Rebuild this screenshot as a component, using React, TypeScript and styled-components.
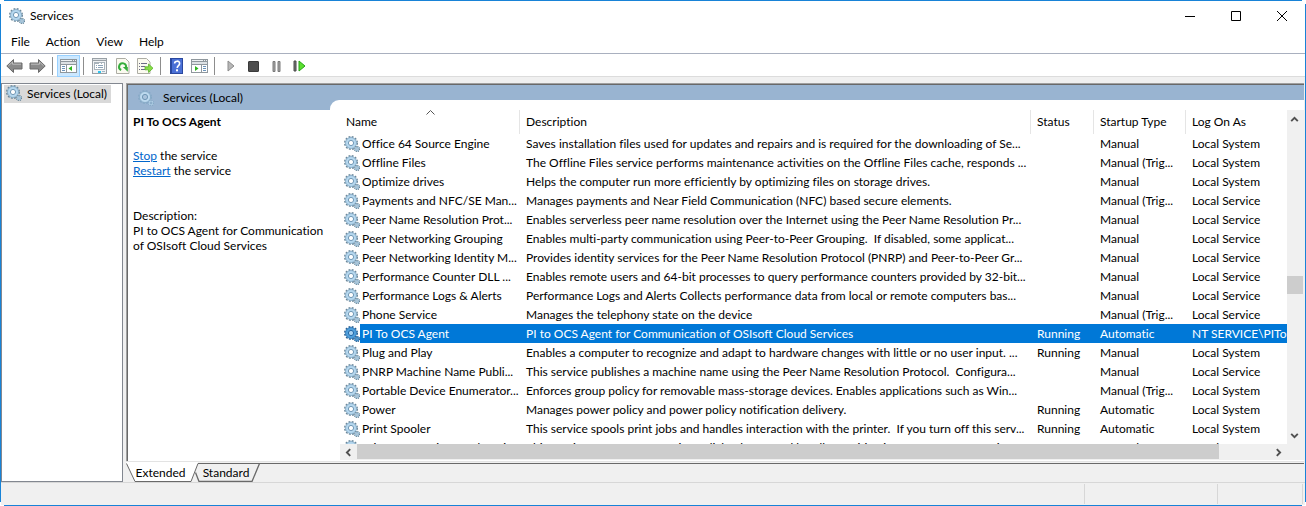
import React from "react";
import styled, { createGlobalStyle, css } from "styled-components";

const Global = createGlobalStyle`
  * { box-sizing: border-box; }
  html, body { margin: 0; padding: 0; background: #fff; }
  body, button, table {
    font-family: Lato, "Open Sans", sans-serif;
    font-size: 12px;
    line-height: 15px;
    font-variant-ligatures: none;
    color: #000;
  }
  button { border: 0; padding: 0; margin: 0; background: transparent; }
`;

const edge = "linear-gradient(#1883d7, #1883d7)";

const Window = styled.div`
  display: flex;
  flex-direction: column;
  height: 100vh;
  min-height: 320px;
  padding: 1px;
  background:
    ${edge} 4px 0 / calc(100% - 8px) 1px no-repeat,
    ${edge} 4px 100% / calc(100% - 8px) 1px no-repeat,
    ${edge} 0 4px / 1px calc(100% - 8px) no-repeat,
    ${edge} 100% 4px / 1px calc(100% - 8px) no-repeat,
    #fff;
`;

const TitleBar = styled.header`
  display: flex;
  align-items: center;
  height: 29px;
  padding-left: 8px;
`;

const Title = styled.h1`
  flex: 1;
  margin: 0 0 0 5px;
  font-size: 12px;
  font-weight: 400;
`;

const WindowButton = styled.button`
  display: flex;
  align-items: center;
  justify-content: center;
  width: 46px;
  height: 29px;
`;

const MenuBar = styled.nav`
  display: flex;
  align-items: center;
  gap: 16px;
  height: 24px;
  padding: 0 0 1px 10px;
  border-bottom: 1px solid #a9b0bf;
`;

const ToolBar = styled.div`
  display: flex;
  align-items: center;
  height: 23px;
  padding: 1px 0 0 2px;
  border-bottom: 1px solid #dcdcdc;
`;

const ToolButton = styled.button<{ $active?: boolean }>`
  display: flex;
  align-items: center;
  justify-content: center;
  width: 23px;
  height: 22px;
  margin-top: 1px;
  border: 1px solid ${(p) => (p.$active ? "#99d1ff" : "transparent")};
  background: ${(p) => (p.$active ? "#cce8ff" : "transparent")};
`;

const Separator = styled.span`
  width: 1px;
  height: 18px;
  margin: 0 4px 0 3px;
  background: #8d8d8d;
`;

const Workspace = styled.div`
  display: flex;
  flex: 1;
  min-height: 0;
  gap: 3px;
  padding: 6px 1px 0 0;
  background: #f0f0f0;
`;

const Tree = styled.aside`
  width: 122px;
  padding: 1px 2px;
  border: 1px solid #828790;
  background: #fff;
`;

const TreeItem = styled.button`
  display: flex;
  align-items: center;
  gap: 5px;
  height: 18px;
  padding: 0 4px 2px 2px;
  background: #d9d9d9;
  white-space: nowrap;
`;

const Main = styled.main`
  display: flex;
  flex: 1;
  flex-direction: column;
  min-width: 0;
`;

const Pane = styled.section`
  display: flex;
  flex: 1;
  min-height: 0;
  border-style: solid;
  border-width: 1px 0 0 1px;
  border-color: #a0a0a0;
  box-shadow: inset 1px 1px #696969;
  padding: 1px 0 0 1px;
  background: #fff;
`;

const PaneBody = styled.div`
  display: flex;
  flex: 1;
  min-width: 0;
  background: linear-gradient(#99b4d1, #99b4d1) 0 0 / 100% 25px no-repeat #fff;
`;

const Details = styled.div`
  width: 202px;
  flex: none;
  padding: 0 0 0 5px;
`;

const PaneTitle = styled.div`
  display: flex;
  align-items: center;
  gap: 9px;
  height: 25px;
  padding-left: 5px;
`;

const ServiceName = styled.h2`
  margin: 4px 0 19px;
  font-size: 12px;
  line-height: 15px;
  font-weight: 700;
`;

const Paragraph = styled.p`
  margin: 0 0 30px;
  white-space: pre-line;
`;

const Link = styled.a`
  color: #0066cc;
  text-decoration: underline;
`;

const ListPanel = styled.div`
  display: flex;
  flex: 1;
  flex-direction: column;
  min-width: 0;
  margin-top: 15px;
  padding: 10px 0 1px 10px;
  border-radius: 9px 0 0 0;
  background: #fff;
`;

const ListRow = styled.div`
  display: flex;
  flex: 1;
  min-height: 0;
`;

const TableClip = styled.div`
  flex: 1;
  min-width: 0;
  overflow: hidden;
`;

const Table = styled.table`
  width: 100%;
  table-layout: fixed;
  border-collapse: collapse;
`;

const Col = styled.col<{ $width?: number }>`
  ${(p) => p.$width && css`width: ${p.$width}px;`}
`;

const HeadCell = styled.th`
  position: relative;
  height: 24px;
  padding: 0 6px 2px;
  text-align: left;
  font-weight: 400;
  white-space: nowrap;
  box-shadow: inset -1px 0 #e5e5e5;
  &:last-child { box-shadow: none; }
`;

const SortMark = styled.svg`
  position: absolute;
  left: calc(50% - 4px);
  top: 0;
`;

const Row = styled.tr<{ $selected?: boolean }>`
  height: 19px;
  ${(p) =>
    p.$selected &&
    css`
      color: #fff;
      td:not(:first-child), td:first-child span { background: #0078d7; }
    `}
`;

const Cell = styled.td`
  height: 19px;
  padding: 0 0 0 6px;
  overflow: hidden;
  white-space: nowrap;
  line-height: 19px;
`;

const NameCell = styled(Cell)`
  padding: 0 0 0 4px;
`;

const NameInner = styled.div`
  display: flex;
  align-items: center;
  height: 19px;
`;

const NameLabel = styled.span`
  flex: 1;
  padding-left: 2px;
`;

const VScroll = styled.div`
  display: flex;
  flex-direction: column;
  width: 17px;
  padding-right: 1px;
  background: #f0f0f0;
`;

const HScroll = styled.div`
  display: flex;
  height: 16px;
  padding-right: 17px;
  background: #f0f0f0;
`;

const ScrollButton = styled.button`
  display: flex;
  flex: none;
  align-items: center;
  justify-content: center;
  width: 17px;
  height: 16px;
`;

const VScrollButton = styled(ScrollButton)`
  width: 15px;
  height: 18px;
`;

const ScrollSpace = styled.span<{ $grow: number }>`
  flex: ${(p) => p.$grow} 1 0;
`;

const VThumb = styled.span`
  height: 18px;
  background: #cdcdcd;
`;

const HThumb = styled.span`
  flex: 862 1 0;
  margin-bottom: 1px;
  background: #cdcdcd;
`;

const TabBar = styled.div`
  display: flex;
  height: 21px;
  padding-bottom: 2px;
  border-top: 1px solid #e3e3e3;
  background: linear-gradient(#696969, #696969) 72px 1px / 100% 1px no-repeat #f0f0f0;
`;

const Tab = styled.button<{ $front?: boolean }>`
  position: relative;
  z-index: ${(p) => (p.$front ? 1 : 0)};
  width: ${(p) => (p.$front ? 72 : 65)}px;
  margin-right: ${(p) => (p.$front ? -3 : 0)}px;
  height: 20px;
  padding-right: 3px;
  text-align: center;
`;

const TabShape = styled.svg`
  position: absolute;
  left: 0;
  top: 0;
  z-index: -1;
`;

const TabLabel = styled.span`
  position: relative;
`;

const StatusBar = styled.footer`
  display: flex;
  height: 23px;
  padding: 1px 2px 1px 0;
  border-top: 1px solid #d7d7d7;
  background: #f0f0f0;
`;

const StatusPart = styled.span<{ $width?: number }>`
  flex: ${(p) => (p.$width ? `0 0 ${p.$width}px` : "1")};
  border-right: 1px solid #d7d7d7;
`;

const GearSvg = styled.svg`
  flex: none;
`;

function Gear({ selected = false, pale = false }: { selected?: boolean; pale?: boolean }) {
  const teeth = selected ? "#2a5f90" : pale ? "#86a9c6" : "#6c8799";
  const ring = selected ? "#4f9fdc" : pale ? "#bcd9ee" : "#b5d7ee";
  const hole = selected ? "#a9d3f2" : pale ? "#a9c3dc" : "#fff";
  const line = selected ? "#1f66a5" : "#6f97b5";
  return (
    <GearSvg width="16" height="16" viewBox="0 0 16 16" aria-hidden="true">
      <circle cx="7" cy="7" r="6.2" fill="none" stroke={teeth} strokeWidth="1.600" strokeDasharray="1.850 1.396" />
      <circle cx="7" cy="7" r="4.200" fill={hole} stroke={ring} strokeWidth="3" />
      <circle cx="7" cy="7" r="5.500" fill="none" stroke={line} strokeWidth="0.600" />
      <circle cx="7" cy="7" r="2.600" fill="none" stroke={line} strokeWidth="1" />
      <circle cx="13" cy="13" r="2.500" fill={ring} stroke={teeth} strokeWidth="1.400" strokeDasharray="1.100 0.863" />
      <circle cx="13" cy="13" r="1" fill={hole} stroke={line} strokeWidth="0.600" />
    </GearSvg>
  );
}

const Arrow = ({ flip = false }: { flip?: boolean }) => (
  <svg width="17" height="16" viewBox="0 0 17 16">
    <g transform={flip ? "matrix(-1 0 0 1 17 0)" : undefined}>
      <path d="M.8 8 7.500 1.500V5h8.500v6H7.500v3.500Z" fill="#8a8a8a" stroke="#6a6a6a" />
      <path d="M2.400 7.800 6.500 4V6.200H15" fill="none" stroke="#bdbdbd" />
    </g>
  </svg>
);

const PanelIcon = ({ right = false }: { right?: boolean }) => (
  <svg width="17" height="14" viewBox="0 0 17 14" shapeRendering="crispEdges">
    <path d="M0 0h17v14H0z" fill="#8f979d" />
    <path d="M1 1h11v1H1zM13 1h1v1h-1zM15 1h1v1h-1z" fill="#eef1f3" />
    <path d="M1 3h15v2H1z" fill="#dde1e4" />
    <path d="M1 6h15v7H1z" fill="#fff" />
    {right ? (
      <>
        <path d="M10 5h1v9h-1z" fill="#8f979d" />
        <path d="M12 7h3v1h-3zM12 9h3v1h-3zM12 11h3v1h-3z" fill="#6b93ba" />
        <path d="M4 7v5l3.500-2.500z" fill="#2fb51f" shapeRendering="auto" />
      </>
    ) : (
      <>
        <path d="M6 5h1v9H6z" fill="#8f979d" />
        <path d="M2 7h3v1H2zM2 9h3v1H2zM2 11h3v1H2z" fill="#6b93ba" />
        <path d="M12 7v5L8.500 9.500z" fill="#2fb51f" shapeRendering="auto" />
      </>
    )}
  </svg>
);

const PropertiesIcon = () => (
  <svg width="15" height="16" viewBox="0 0 15 16" shapeRendering="crispEdges">
    <path d="M0 0h15v16H0z" fill="#99a0a6" />
    <path d="M1 1h13v1H1z" fill="#dfe3e6" />
    <path d="M1 3h13v12H1z" fill="#f0f2f4" />
    <path d="M2 4h11v8H2z" fill="#a9b3bb" />
    <path d="M3 6h9v5H3zM7 5h2v1H7zM10 5h2v1h-2z" fill="#fff" />
    <path d="M4 7h1v1H4zM6 7h5v1H6zM4 9h1v1H4zM6 9h5v1H6z" fill="#8ba3b8" />
    <path d="M6 13h3v2H6z" fill="#2fc4ee" />
    <path d="M10 13h3v1h-3z" fill="#9fb6c6" />
  </svg>
);

const PagePath = () => (
  <path d="M.5.5h9l3.500 3.500v11.500H.5z" fill="#fbfaf0" stroke="#adada5" />
);

const RefreshIcon = () => (
  <svg width="14" height="16" viewBox="0 0 14 16">
    <PagePath />
    <path d="M5.200 12A3.500 3.500 0 1 1 10 9.500" fill="none" stroke="#36ad3c" strokeWidth="2" />
    <path d="M6.800 9h5v4.800z" fill="#36ad3c" />
  </svg>
);

const ExportIcon = () => (
  <svg width="17" height="16" viewBox="0 0 17 16">
    <PagePath />
    <path d="M2 5.500h1M4 5.500h6M2 8.500h1M4 8.500h4M2 11.500h1M4 11.500h4" stroke="#6b6b86" />
    <path d="M8 8.800h3.500V6L16 10.200l-4.500 4.200v-2.600H8z" fill="#86de45" stroke="#5cb32b" strokeWidth=".8" />
  </svg>
);

const HelpIcon = () => (
  <svg width="13" height="16" viewBox="0 0 13 16">
    <rect width="13" height="16" fill="#2a489f" />
    <rect x="2" y="1" width="10" height="14" fill="#4a70d6" />
    <path d="M4.600 5.600C4.600 2.400 9.600 2.400 9.600 5.400 9.600 7.600 7.200 7.600 7.200 10" fill="none" stroke="#fff" strokeWidth="1.600" />
    <rect x="6" y="11.300" width="2" height="2" fill="#fff" />
  </svg>
);

const PlayIcon = () => (
  <svg width="8" height="12" viewBox="0 0 8 12">
    <path d="M1 1v10L7 6z" fill="#b8b8b8" stroke="#8c8c8c" />
  </svg>
);

const StopIcon = () => (
  <svg width="11" height="11" viewBox="0 0 11 11">
    <rect x=".5" y=".5" width="10" height="10" rx=".5" fill="#4e4e4e" stroke="#3a3a3a" />
  </svg>
);

const PauseIcon = () => (
  <svg width="9" height="11" viewBox="0 0 9 11">
    <path d="M1 .5h2v10H1zM6 .5h2v10H6z" fill="#a5a5a5" stroke="#7a7a7a" />
  </svg>
);

const ResumeIcon = () => (
  <svg width="13" height="12" viewBox="0 0 13 12">
    <path d="M1 1h2v10H1z" fill="#777" stroke="#4b4b4b" />
    <path d="M6 1v10L12 6z" fill="#5be02f" stroke="#27a319" />
  </svg>
);

type Direction = "up" | "down" | "left" | "right";
const turns: Record<Direction, number> = { up: 0, right: 90, down: 180, left: 270 };

const Chevron = ({ to }: { to: Direction }) => (
  <svg width="9" height="9" viewBox="0 0 9 9">
    <path d="M1.200 6.200 4.500 2.900 7.800 6.200" transform={`rotate(${turns[to]} 4.5 4.5)`} fill="none" stroke="#505050" strokeWidth="1.900" />
  </svg>
);

interface Service {
  name: string;
  description: string;
  status?: string;
  startup: string;
  logOn: string;
}

const SYSTEM = "Local System";
const SERVICE = "Local Service";

const services: Service[] = [
  { name: "Office 64 Source Engine", description: "Saves installation files used for updates and repairs and is required for the downloading of Se...", startup: "Manual", logOn: SYSTEM },
  { name: "Offline Files", description: "The Offline Files service performs maintenance activities on the Offline Files cache, responds ...", startup: "Manual (Trig...", logOn: SYSTEM },
  { name: "Optimize drives", description: "Helps the computer run more efficiently by optimizing files on storage drives.", startup: "Manual", logOn: SYSTEM },
  { name: "Payments and NFC/SE Man...", description: "Manages payments and Near Field Communication (NFC) based secure elements.", startup: "Manual (Trig...", logOn: SERVICE },
  { name: "Peer Name Resolution Prot...", description: "Enables serverless peer name resolution over the Internet using the Peer Name Resolution Pr...", startup: "Manual", logOn: SERVICE },
  { name: "Peer Networking Grouping", description: "Enables multi-party communication using Peer-to-Peer Grouping.\u00a0 If disabled, some applicat...", startup: "Manual", logOn: SERVICE },
  { name: "Peer Networking Identity M...", description: "Provides identity services for the Peer Name Resolution Protocol (PNRP) and Peer-to-Peer Gr...", startup: "Manual", logOn: SERVICE },
  { name: "Performance Counter DLL ...", description: "Enables remote users and 64-bit processes to query performance counters provided by 32-bit...", startup: "Manual", logOn: SERVICE },
  { name: "Performance Logs & Alerts", description: "Performance Logs and Alerts Collects performance data from local or remote computers bas...", startup: "Manual", logOn: SERVICE },
  { name: "Phone Service", description: "Manages the telephony state on the device", startup: "Manual (Trig...", logOn: SERVICE },
  { name: "PI To OCS Agent", description: "PI to OCS Agent for Communication of OSIsoft Cloud Services", status: "Running", startup: "Automatic", logOn: "NT SERVICE\\PIToOCSAgent" },
  { name: "Plug and Play", description: "Enables a computer to recognize and adapt to hardware changes with little or no user input. ...", status: "Running", startup: "Manual", logOn: SYSTEM },
  { name: "PNRP Machine Name Publi...", description: "This service publishes a machine name using the Peer Name Resolution Protocol.\u00a0 Configura...", startup: "Manual", logOn: SERVICE },
  { name: "Portable Device Enumerator...", description: "Enforces group policy for removable mass-storage devices. Enables applications such as Win...", startup: "Manual (Trig...", logOn: SYSTEM },
  { name: "Power", description: "Manages power policy and power policy notification delivery.", status: "Running", startup: "Automatic", logOn: SYSTEM },
  { name: "Print Spooler", description: "This service spools print jobs and handles interaction with the printer.\u00a0 If you turn off this serv...", status: "Running", startup: "Automatic", logOn: SYSTEM },
  { name: "Printer Extensions and Notif...", description: "This service opens custom printer dialog boxes and handles notifications from a remote print s...", startup: "Manual", logOn: SYSTEM },
];

export default function App() {
  const selected = "PI To OCS Agent";
  return (
    <>
      <Global />
      <Window>
        <TitleBar>
          <Gear />
          <Title>Services</Title>
          <WindowButton aria-label="Minimize">
            <svg width="10" height="10" viewBox="0 0 10 10"><path d="M0 5.500h10" stroke="#000" /></svg>
          </WindowButton>
          <WindowButton aria-label="Maximize">
            <svg width="10" height="10" viewBox="0 0 10 10"><path d="M.5.5h9v9h-9z" fill="none" stroke="#000" /></svg>
          </WindowButton>
          <WindowButton aria-label="Close">
            <svg width="10" height="10" viewBox="0 0 10 10"><path d="m0 0 10 10M10 0 0 10" stroke="#000" /></svg>
          </WindowButton>
        </TitleBar>
        <MenuBar>
          {["File", "Action", "View", "Help"].map((m) => <button key={m}>{m}</button>)}
        </MenuBar>
        <ToolBar>
          <ToolButton aria-label="Back"><Arrow /></ToolButton>
          <ToolButton aria-label="Forward"><Arrow flip /></ToolButton>
          <Separator />
          <ToolButton $active aria-label="Show or hide console tree"><PanelIcon /></ToolButton>
          <Separator />
          <ToolButton aria-label="Properties"><PropertiesIcon /></ToolButton>
          <ToolButton aria-label="Refresh"><RefreshIcon /></ToolButton>
          <ToolButton aria-label="Export list"><ExportIcon /></ToolButton>
          <Separator />
          <ToolButton aria-label="Help"><HelpIcon /></ToolButton>
          <ToolButton aria-label="Show or hide action pane"><PanelIcon right /></ToolButton>
          <Separator />
          <ToolButton aria-label="Start service"><PlayIcon /></ToolButton>
          <ToolButton aria-label="Stop service"><StopIcon /></ToolButton>
          <ToolButton aria-label="Pause service"><PauseIcon /></ToolButton>
          <ToolButton aria-label="Restart service"><ResumeIcon /></ToolButton>
        </ToolBar>
        <Workspace>
          <Tree>
            <TreeItem><Gear />Services (Local)</TreeItem>
          </Tree>
          <Main>
            <Pane>
              <PaneBody>
                <Details>
                  <PaneTitle><Gear pale />Services (Local)</PaneTitle>
                  <ServiceName>PI To OCS Agent</ServiceName>
                  <Paragraph>
                    <Link href="#stop">Stop</Link> the service<br />
                    <Link href="#restart">Restart</Link> the service
                  </Paragraph>
                  <Paragraph>{"Description:\nPI to OCS Agent for Communication\nof OSIsoft Cloud Services"}</Paragraph>
                </Details>
                <ListPanel>
                  <ListRow>
                    <TableClip>
                      <Table>
                        <colgroup>
                          <Col $width={180} />
                          <Col />
                          <Col $width={63} />
                          <Col $width={92} />
                          <Col $width={101} />
                        </colgroup>
                        <thead>
                          <tr>
                            <HeadCell>
                              Name
                              <SortMark width="9" height="5" viewBox="0 0 9 5"><path d="M.5 4.500l4-4 4 4" fill="none" stroke="#555" /></SortMark>
                            </HeadCell>
                            <HeadCell>Description</HeadCell>
                            <HeadCell>Status</HeadCell>
                            <HeadCell>Startup Type</HeadCell>
                            <HeadCell>Log On As</HeadCell>
                          </tr>
                        </thead>
                        <tbody>
                          {services.map((s) => (
                            <Row key={s.name} $selected={s.name === selected}>
                              <NameCell>
                                <NameInner>
                                  <Gear selected={s.name === selected} />
                                  <NameLabel>{s.name}</NameLabel>
                                </NameInner>
                              </NameCell>
                              <Cell>{s.description}</Cell>
                              <Cell>{s.status}</Cell>
                              <Cell>{s.startup}</Cell>
                              <Cell>{s.logOn}</Cell>
                            </Row>
                          ))}
                        </tbody>
                      </Table>
                    </TableClip>
                    <VScroll>
                      <VScrollButton aria-label="Scroll up"><Chevron to="up" /></VScrollButton>
                      <ScrollSpace $grow={149} />
                      <VThumb />
                      <ScrollSpace $grow={132} />
                      <VScrollButton aria-label="Scroll down"><Chevron to="down" /></VScrollButton>
                    </VScroll>
                  </ListRow>
                  <HScroll>
                    <ScrollButton aria-label="Scroll left"><Chevron to="left" /></ScrollButton>
                    <HThumb />
                    <ScrollSpace $grow={51} />
                    <ScrollButton aria-label="Scroll right"><Chevron to="right" /></ScrollButton>
                  </HScroll>
                </ListPanel>
              </PaneBody>
            </Pane>
            <TabBar>
              <Tab $front>
                <TabShape width="74" height="20" viewBox="0 0 74 20">
                  <path d="M0 0h72v1.500L65 19.500H9L.5 1.500z" fill="#fff" />
                  <path d="M.5 1.500 9 19.500H65L72 1.500" fill="none" stroke="#696969" />
                </TabShape>
                <TabLabel>Extended</TabLabel>
              </Tab>
              <Tab>
                <TabShape width="65" height="20" viewBox="0 0 65 20">
                  <path d="M.5 10.500 4 19.500H57L64.500 1.500" fill="none" stroke="#696969" strokeWidth="1.300" />
                </TabShape>
                <TabLabel>Standard</TabLabel>
              </Tab>
            </TabBar>
          </Main>
        </Workspace>
        <StatusBar>
          <StatusPart />
          <StatusPart $width={133} />
          <StatusPart $width={85} />
        </StatusBar>
      </Window>
    </>
  );
}
